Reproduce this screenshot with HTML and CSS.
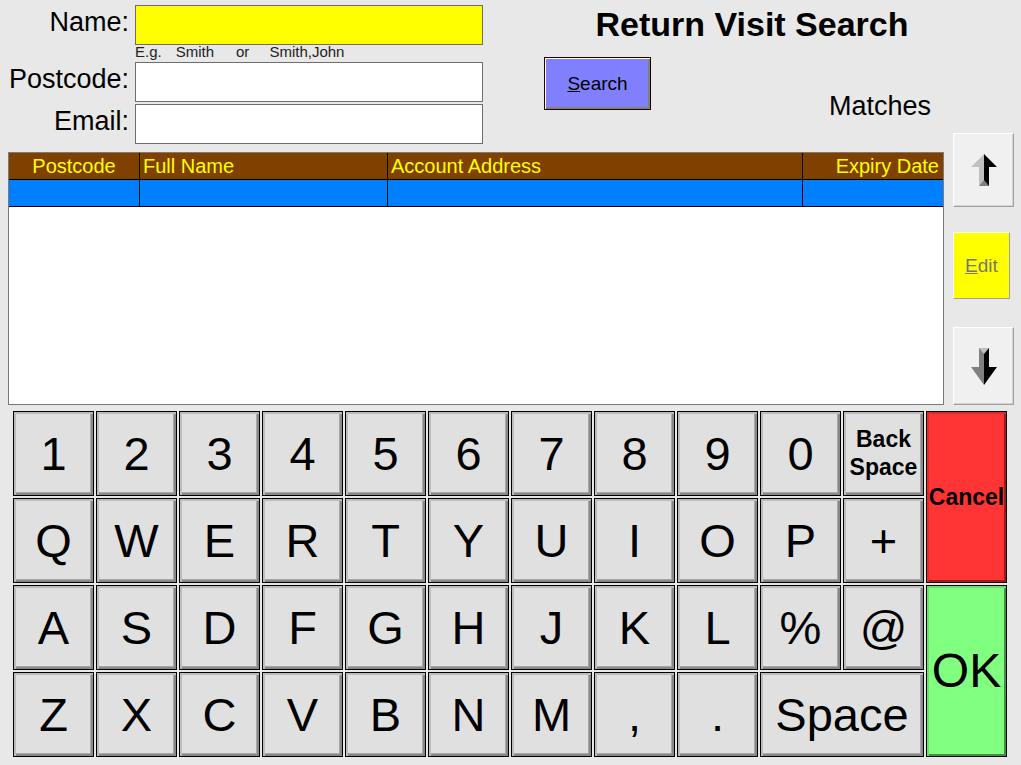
FILE: index.html
```html
<!DOCTYPE html>
<html lang="en">
  <head>
    <meta charset="UTF-8" />
    <title>Return Visit Search</title>
    <link rel="stylesheet" href="styles.css">
  </head>
  <body>
    <div class="top">
      <!-- Search fields -->
      <div class="form">
        <div class="field">
          <label class="label" for="name">Name:</label>
          <input class="input input-name" id="name" type="text" />
        </div>
        <div class="hint">
          <span class="hint-eg">E.g.</span><span class="hint-a">Smith</span><span class="hint-or">or</span><span>Smith,John</span>
        </div>
        <div class="field">
          <label class="label" for="postcode">Postcode:</label>
          <input class="input" id="postcode" type="text" />
        </div>
        <div class="field field-email">
          <label class="label" for="email">Email:</label>
          <input class="input" id="email" type="text" />
        </div>
      </div>

      <div class="side">
        <h1 class="title">Return Visit Search</h1>
        <div class="search-row">
          <button class="search-button"><u>S</u>earch</button>
          <div class="matches">Matches</div>
        </div>
      </div>
    </div>

    <div class="middle">
      <!-- Results -->
      <div class="results">
        <div class="results-head">
          <div class="cell cell-center">Postcode</div>
          <div class="cell">Full Name</div>
          <div class="cell">Account Address</div>
          <div class="cell cell-right">Expiry Date</div>
        </div>
        <div class="results-row">
          <div class="cell"></div>
          <div class="cell"></div>
          <div class="cell"></div>
          <div class="cell"></div>
        </div>
      </div>

      <div class="nav">
        <button class="nav-button nav-up">
          <svg width="26" height="32" viewBox="0 0 26 32">
            <polygon points="13,0 0,13 8,13 8,32 13,32" fill="#c0c0c0" />
            <polygon points="13,0 26,13 18,13 18,32 13,32" fill="#000" />
            <polygon points="8,32 18,32 13,26" fill="#808080" />
          </svg>
        </button>
        <button class="edit-button"><u>E</u>dit</button>
        <button class="nav-button nav-down">
          <svg width="26" height="37" viewBox="0 0 26 37">
            <polygon points="8,0 13,0 13,37 0,19 8,19" fill="#808080" />
            <polygon points="13,0 18,0 18,19 26,19 13,37" fill="#000" />
            <polygon points="8,0 18,0 13,6" fill="#c0c0c0" />
          </svg>
        </button>
      </div>
    </div>

    <!-- On screen keyboard -->
    <div class="keyboard">
      <button class="key">1</button>
      <button class="key">2</button>
      <button class="key">3</button>
      <button class="key">4</button>
      <button class="key">5</button>
      <button class="key">6</button>
      <button class="key">7</button>
      <button class="key">8</button>
      <button class="key">9</button>
      <button class="key">0</button>
      <button class="key key-small">Back<br />Space</button>
      <button class="key key-cancel">Cancel</button>

      <button class="key">Q</button>
      <button class="key">W</button>
      <button class="key">E</button>
      <button class="key">R</button>
      <button class="key">T</button>
      <button class="key">Y</button>
      <button class="key">U</button>
      <button class="key">I</button>
      <button class="key">O</button>
      <button class="key">P</button>
      <button class="key">+</button>

      <button class="key">A</button>
      <button class="key">S</button>
      <button class="key">D</button>
      <button class="key">F</button>
      <button class="key">G</button>
      <button class="key">H</button>
      <button class="key">J</button>
      <button class="key">K</button>
      <button class="key">L</button>
      <button class="key">%</button>
      <button class="key">@</button>
      <button class="key key-ok">OK</button>

      <button class="key">Z</button>
      <button class="key">X</button>
      <button class="key">C</button>
      <button class="key">V</button>
      <button class="key">B</button>
      <button class="key">N</button>
      <button class="key">M</button>
      <button class="key">,</button>
      <button class="key">.</button>
      <button class="key key-space">Space</button>
    </div>
  </body>
</html>
```

FILE: styles.css
```css
body {
  margin: 0;
  background-color: #e8e8e8;
  font-family: "Liberation Sans", Arial, sans-serif;
  color: #000;
  width: 1021px;
  height: 765px;
  overflow: hidden;
}
button {
  font-family: "Liberation Sans", Arial, sans-serif;
  color: #000;
  padding: 0;
  cursor: pointer;
}
.top {
  display: flex;
}
.form {
  width: 483px;
  flex: none;
  padding-top: 5px;
}
.field {
  display: flex;
  align-items: flex-start;
}
.field-email {
  margin-top: 2px;
}
.label {
  width: 129px;
  margin-right: 6px;
  text-align: right;
  font-size: 27px;
  line-height: 34px;
}
.input {
  width: 348px;
  height: 40px;
  box-sizing: border-box;
  border: 1px solid #6e6e6e;
  background-color: #fff;
  margin: 0;
}
.input-name {
  background-color: #ffff00;
}
.hint {
  height: 17px;
  margin-left: 135px;
  font-size: 15px;
  line-height: 13px;
  color: #222;
}
.hint-eg {
  margin-right: 14px;
}
.hint-a {
  margin-right: 22px;
}
.hint-or {
  margin-right: 20px;
}
.side {
  flex: 1;
}
.title {
  margin: 0;
  padding-top: 5px;
  font-size: 34px;
  line-height: 39px;
  text-align: center;
}
.search-row {
  display: flex;
  align-items: flex-start;
}
.search-button {
  margin: 13px 0 0 61px;
  width: 107px;
  height: 53px;
  background-color: #8080ff;
  border: 1px solid #200000;
  box-shadow: inset 1px 1px 0 #fff, inset -2px -2px 0 #808080;
  font-size: 19px;
}
.matches {
  margin: 47px 0 0 178px;
  font-size: 27px;
  line-height: 31px;
}
.middle {
  display: flex;
  padding-left: 8px;
  margin-top: 8px;
}
.results {
  width: 936px;
  height: 253px;
  box-sizing: border-box;
  border: 1px solid #7a7a7a;
  background-color: #fff;
}
.results-head,
.results-row {
  display: grid;
  grid-template-columns: 131px 248px 415px 140px;
  height: 27px;
  box-sizing: border-box;
  border-bottom: 1px solid #000;
}
.results-head {
  background-color: #804000;
  color: #ffff00;
  font-size: 20px;
  line-height: 26px;
}
.results-row {
  background-color: #0080ff;
}
.cell {
  border-right: 1px solid #000;
  padding-left: 3px;
  white-space: nowrap;
  overflow: hidden;
}
.cell:last-child {
  border-right: none;
}
.cell-center {
  text-align: center;
  padding-left: 0;
}
.cell-right {
  text-align: right;
  padding-right: 4px;
}
.nav {
  display: flex;
  flex-direction: column;
  margin-left: 9px;
  margin-top: -19px;
}
.nav-button {
  width: 61px;
  background-color: #f0f0f0;
  border: 1px solid;
  border-color: #fff #a0a0a0 #a0a0a0 #fff;
  box-shadow: inset -1px -1px 0 #d4d4d4;
  display: flex;
  align-items: center;
  justify-content: center;
}
.nav-up {
  height: 74px;
}
.nav-down {
  height: 78px;
  margin-top: 28px;
}
.edit-button {
  margin-top: 25px;
  width: 57px;
  height: 67px;
  background-color: #ffff00;
  border: 1px solid;
  border-color: #fff #a0a0a0 #a0a0a0 #fff;
  color: #777;
  font-size: 19px;
}
.keyboard {
  display: grid;
  grid-template-columns: repeat(12, 81px);
  grid-auto-rows: 85px;
  gap: 2px;
  padding-left: 13px;
  margin-top: 6px;
}
.key {
  border: 1px solid #000;
  background-color: #e0e0e0;
  box-shadow: inset 2px 2px 0 #bcbcbc, inset -2px -2px 0 #888, inset -3px -3px 0 #a8a8a8;
  font-size: 47px;
  line-height: 1;
  display: flex;
  align-items: center;
  justify-content: center;
}
.key-small {
  font-size: 23px;
  font-weight: bold;
  line-height: 28px;
  padding-bottom: 2px;
}
.key-cancel {
  grid-column: 12;
  grid-row: 1 / span 2;
  background-color: #ff3535;
  box-shadow: inset 2px 2px 0 #e02a2a, inset -2px -2px 0 #a01818;
  font-size: 23px;
  font-weight: bold;
  white-space: nowrap;
}
.key-ok {
  grid-column: 12;
  grid-row: 3 / span 2;
  background-color: #80ff80;
  box-shadow: inset 2px 2px 0 #6ce06c, inset -2px -2px 0 #409040;
  font-size: 48px;
}
.key-space {
  grid-column: span 2;
}
```
